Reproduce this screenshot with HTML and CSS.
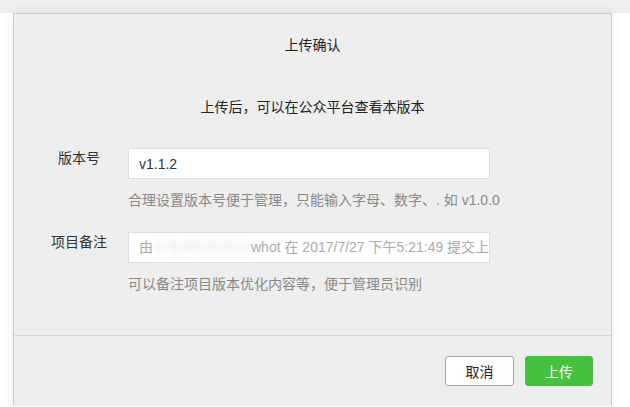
FILE: index.html
```html
<!DOCTYPE html>
<html lang="zh-CN">
<head>
    <meta charset="UTF-8">
    <meta name="viewport" content="width=device-width, initial-scale=1.0">
    <title>上传确认</title>
    <link rel="stylesheet" href="styles.css">
</head>
<body>
    <div class="top-bar"></div>

    <div class="stage">
        <!-- Upload confirm dialog -->
        <div class="dialog">
            <div class="dialog-header">
                <div class="dialog-title">上传确认</div>
                <div class="dialog-desc">上传后，可以在公众平台查看本版本</div>
            </div>

            <div class="dialog-body">
                <div class="form-row">
                    <label class="form-label" for="version">版本号</label>
                    <div class="form-field">
                        <input id="version" class="form-input" type="text" value="v1.1.2">
                        <div class="form-tip">合理设置版本号便于管理，只能输入字母、数字、. 如 v1.0.0</div>
                    </div>
                </div>
                <div class="form-row">
                    <label class="form-label">项目备注</label>
                    <div class="form-field">
                        <div class="form-input form-input-note">由<span class="masked">开发者的的的的</span>whot 在 2017/7/27 下午5:21:49 提交上传</div>
                        <div class="form-tip">可以备注项目版本优化内容等，便于管理员识别</div>
                    </div>
                </div>
            </div>

            <div class="dialog-footer">
                <button class="btn btn-default">取消</button>
                <button class="btn btn-primary">上传</button>
            </div>
        </div>
    </div>
</body>
</html>
```

FILE: styles.css
```css
/* Upload confirm dialog */

body {
    margin: 0;
    background: #fff;
    font-family: "Liberation Sans", "Noto Sans CJK SC", sans-serif;
    font-size: 14px;
    color: #333;
    overflow: hidden;
}

.top-bar {
    height: 13px;
    background: #efefef;
}

.stage {
    display: flex;
    padding-left: 13px;
}

.dialog {
    width: 597px;
    background: #eeeeee;
    border: 1px solid #cccccc;
    border-bottom: none;
    box-shadow: 0 0 14px rgba(0, 0, 0, 0.08);
}

/* Header */
.dialog-header {
    text-align: center;
    padding-top: 21px;
}

.dialog-title {
    line-height: 20px;
    font-size: 14px;
    color: #222;
}

.dialog-desc {
    margin-top: 42px;
    line-height: 20px;
    color: #222;
}

/* Form */
.dialog-body {
    padding: 31px 0 41px;
}

.form-row {
    display: flex;
}

.form-row + .form-row {
    margin-top: 22px;
}

.form-label {
    width: 70px;
    margin-left: 30px;
    margin-right: 14px;
    text-align: center;
    line-height: 20px;
    color: #333;
}

.form-field {
    width: 362px;
}

.form-input {
    box-sizing: border-box;
    display: block;
    width: 100%;
    height: 31px;
    padding: 0 10px;
    border: 1px solid #dddddd;
    background: #fff;
    font-family: inherit;
    font-size: 14px;
    color: #333;
    outline: none;
}

.form-input-note {
    line-height: 29px;
    white-space: nowrap;
    overflow: hidden;
    color: #aaa;
}

.masked {
    color: transparent;
    text-shadow: 0 0 7px rgba(0, 0, 0, 0.12);
}

.form-tip {
    margin-top: 11px;
    line-height: 20px;
    white-space: nowrap;
    color: #888;
}

/* Footer */
.dialog-footer {
    display: flex;
    justify-content: flex-end;
    gap: 11px;
    padding: 20px 18px 20px 0;
    border-top: 1px solid #d6d6d6;
}

.btn {
    box-sizing: border-box;
    height: 30px;
    width: 69px;
    border-radius: 3px;
    font-family: inherit;
    font-size: 14px;
    cursor: pointer;
}

.btn-default {
    background: #fff;
    border: 1px solid #a5a5a5;
    color: #222;
}

.btn-primary {
    width: 68px;
    background: #44c13e;
    border: 1px solid #44c13e;
    color: #fff;
}
```
